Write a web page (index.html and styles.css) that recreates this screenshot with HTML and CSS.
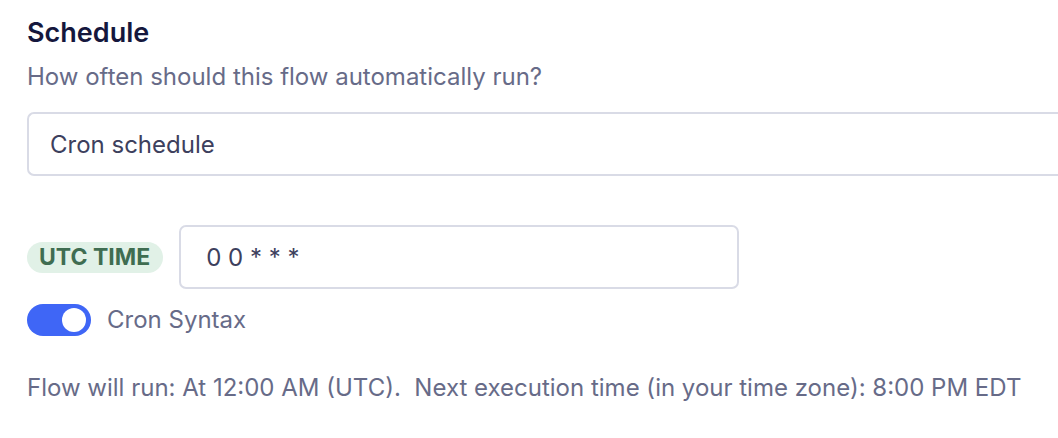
FILE: index.html
```html
<!DOCTYPE html>
<html>
<head>
<meta charset="utf-8">
<link rel="stylesheet" href="styles.css">
</head>
<body>
<div class="page">
  <h2 class="title">Schedule</h2>
  <p class="subtitle">How often should this flow automatically run?</p>
  <div class="select">Cron schedule</div>
  <div class="cron-row">
    <span class="badge">UTC TIME</span>
    <div class="input">0 0 * * *</div>
  </div>
  <div class="toggle-row">
    <span class="toggle"><span class="knob"></span></span>
    <span class="toggle-label">Cron Syntax</span>
  </div>
  <p class="summary">Flow will run: At 12:00 AM (UTC).&nbsp; Next execution time (in your time zone): 8:00 PM EDT</p>
</div>
</body>
</html>
```
FILE: styles.css
```css
html, body {
  margin: 0;
  padding: 0;
  background: #fff;
  overflow: hidden;
}
body {
  width: 1058px;
  height: 438px;
  font-family: Inter, "Noto Sans", sans-serif;
}
.page {
  padding: 16px 0 0 27px;
  display: flex;
  flex-direction: column;
  align-items: flex-start;
}
.title {
  margin: 0;
  font-size: 27px;
  line-height: 34px;
  font-weight: 600;
  color: #15173d;
}
.subtitle {
  margin: 12px 0 0;
  font-size: 24px;
  line-height: 30px;
  color: #676b88;
}
.select {
  margin-top: 20px;
  align-self: stretch;
  height: 64px;
  box-sizing: border-box;
  border: 2px solid #d9dbe6;
  border-right: 0;
  border-radius: 7px 0 0 7px;
  padding: 0 21px;
  display: flex;
  align-items: center;
  font-size: 24px;
  color: #3d405d;
}
.cron-row {
  margin-top: 49px;
  display: flex;
  align-items: center;
  gap: 16px;
}
.badge {
  background: #e1f1e7;
  color: #3f6d51;
  font-weight: 700;
  font-size: 23px;
  height: 31px;
  line-height: 31px;
  padding: 0 13px 0 12px;
  border-radius: 16px;
}
.input {
  width: 560px;
  height: 64px;
  box-sizing: border-box;
  border: 2px solid #d9dbe6;
  border-radius: 7px;
  padding: 0 25px;
  display: flex;
  align-items: center;
  font-size: 24px;
  color: #3d405d;
}
.toggle-row {
  margin-top: 15px;
  display: flex;
  align-items: center;
  gap: 16px;
}
.toggle {
  width: 64px;
  height: 32px;
  border-radius: 16px;
  background: #3f66f6;
  display: flex;
  align-items: center;
  justify-content: flex-end;
  padding: 0 5px;
  box-sizing: border-box;
}
.knob {
  width: 24px;
  height: 24px;
  border-radius: 50%;
  background: #fff;
}
.toggle-label {
  font-size: 24px;
  line-height: 30px;
  color: #676b88;
}
.summary {
  margin: 37px 0 0;
  font-size: 24px;
  line-height: 30px;
  color: #676b88;
}
```
